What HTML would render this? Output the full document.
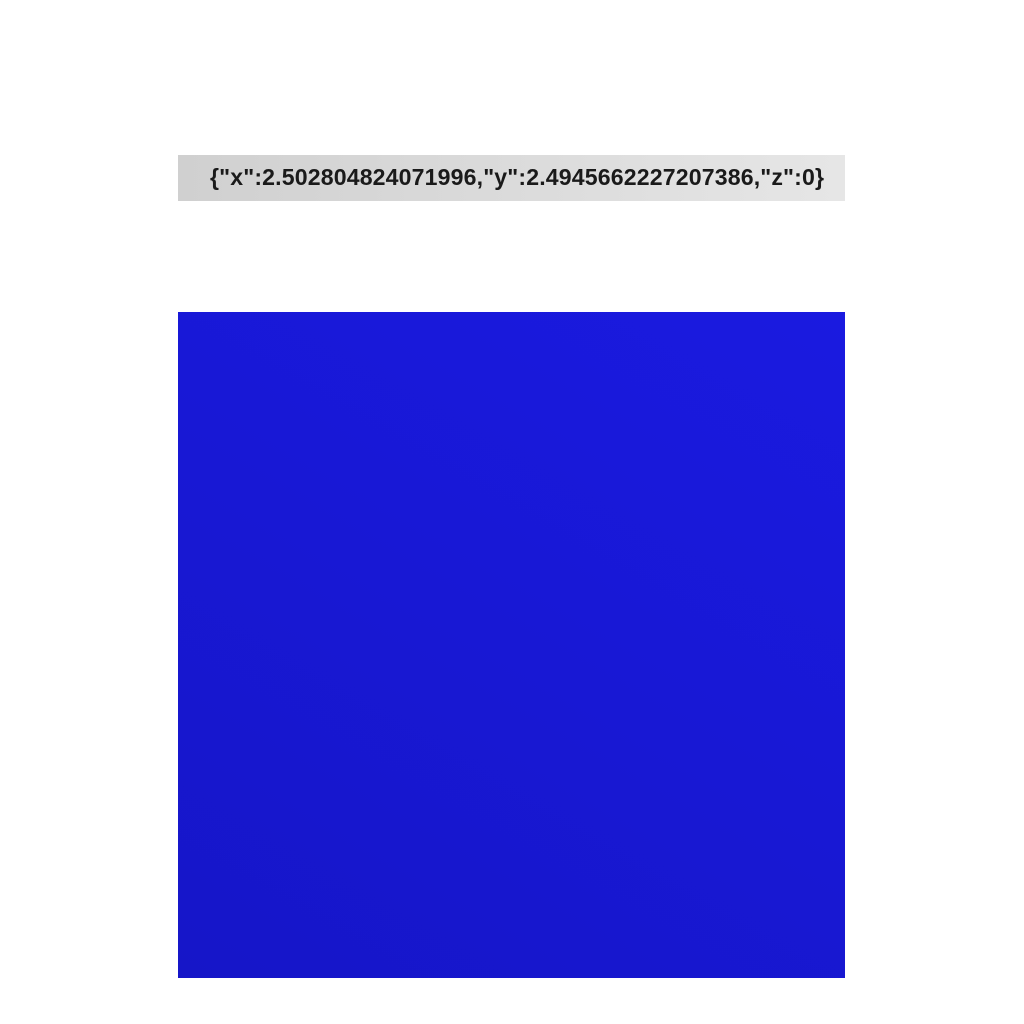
<!DOCTYPE html>
<html><head><style>
body{margin:0;width:1024px;height:1024px;background:#fff;position:relative;overflow:hidden}
.bar{position:absolute;left:178px;top:155px;width:667px;height:46px;background:linear-gradient(90deg,#d0d0d0,#e6e6e6)}
.t{position:absolute;left:210px;top:155px;font:bold 23.1px "Liberation Sans",sans-serif;color:#1a1a1a;line-height:44px;white-space:nowrap;letter-spacing:0.15px}
.box{position:absolute;left:178px;top:312px;width:667px;height:666px;background:linear-gradient(30deg,#1616c8,#1a1ae0)}
</style></head><body>
<div class="bar"></div>
<div class="t">{"x":2.502804824071996,"y":2.4945662227207386,"z":0}</div>
<div class="box"></div>
</body></html>
